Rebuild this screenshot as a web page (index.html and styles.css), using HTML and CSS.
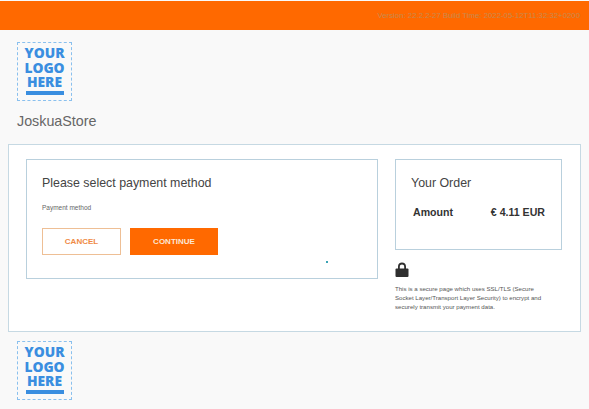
FILE: index.html

```html
<!DOCTYPE html>
<html lang="en">
<head>
  <meta charset="UTF-8" />
  <title>JoskuaStore</title>
  <link rel="stylesheet" href="styles.css">
</head>
<body>
<header class="top-bar">
  <span class="version">Version: 22.2.2-27 Build Time: 2022-05-12T11:32:32+0200</span>
</header>

<div class="logo">
  <span>YOUR</span>
  <span>LOGO</span>
  <span>HERE</span>
  <div class="logo-line"></div>
</div>
<h1 class="store-name">JoskuaStore</h1>

<main class="panel">
  <section class="card payment">
    <h2>Please select payment method</h2>
    <p class="method-label">Payment method</p>
    <div class="buttons">
      <button class="btn btn-cancel">CANCEL</button>
      <button class="btn btn-continue">CONTINUE</button>
    </div>
    <div class="spinner-dot"></div>
  </section>

  <aside class="side">
    <section class="card order">
      <h2>Your Order</h2>
      <div class="amount-row">
        <span>Amount</span>
        <span>€ 4.11 EUR</span>
      </div>
    </section>
    <svg class="lock" width="14" height="15" viewBox="0 0 14 15">
      <path d="M3 7V4.6C3 2.2 4.7.6 7 .6s4 1.6 4 4V7H9.2V4.7C9.2 3.3 8.3 2.4 7 2.4s-2.2.9-2.2 2.3V7z" fill="#2f2f2f"/>
      <rect x="0.5" y="6.5" width="13" height="8.5" rx="1" fill="#2f2f2f"/>
    </svg>
    <p class="secure-text">This is a secure page which uses SSL/TLS (Secure Socket Layer/Transport Layer Security) to encrypt and securely transmit your payment data.</p>
  </aside>
</main>

<div class="logo logo-bottom">
  <span>YOUR</span>
  <span>LOGO</span>
  <span>HERE</span>
  <div class="logo-line"></div>
</div>
</body>
</html>
```

FILE: styles.css

```css
html, body { height: 409px; overflow: hidden; }
body { font-family: "Liberation Sans", Arial, sans-serif; margin: 0; padding: 1px 0 0; background: #f9f9f9; color: #444; box-sizing: border-box; }

.top-bar {
  background: #ff6900;
  height: 29px;
  display: flex;
  justify-content: flex-end;
  align-items: center;
  padding-right: 9px;
}
.version { font-size: 7.8px; color: #c98a4e; }

.logo {
  width: 53px;
  height: 54px;
  margin: 12px 0 0 17px;
  border: 1px dashed #8ac0ee;
  display: flex;
  flex-direction: column;
  align-items: center;
  padding-top: 3px;
  font-family: "Open Sans", sans-serif;
  font-weight: 800;
  font-size: 13.8px;
  line-height: 14.5px;
  color: #3a8ee0;
}
.logo-line { width: 38px; height: 4px; background: #3a8ee0; margin-top: 1px; }
.logo-bottom { margin-top: 9px; }

.store-name { font-size: 14.3px; font-weight: normal; line-height: 18px; color: #666; margin: 11px 0 14px 17px; }

.panel {
  margin: 0 8px;
  height: 188px;
  box-sizing: border-box;
  background: #fff;
  border: 1px solid #c6d9e3;
  padding: 14px 17px 0;
  display: flex;
  gap: 17px;
}
.card { background: #fff; border: 1px solid #b9d0dd; box-sizing: border-box; }
.payment { width: 352px; height: 120px; padding: 16px 15px; position: relative; }
.card h2 { font-size: 12.4px; font-weight: normal; line-height: 14px; color: #444; margin: 0; }
.method-label { font-size: 6.5px; line-height: 8px; color: #666; margin: 14px 0 0; }

.buttons { display: flex; gap: 9px; margin-top: 16px; }
.btn {
  height: 27px;
  font-family: inherit;
  font-size: 8px;
  font-weight: bold;
  border-radius: 0;
  padding: 0;
}
.btn-cancel { width: 79px; background: #fff; border: 1px solid #eebf95; color: #ef8a45; }
.btn-continue { width: 88px; background: #ff6900; border: 1px solid #ff6900; color: #fbe6d4; }

.spinner-dot { position: absolute; right: 49px; bottom: 15px; width: 2px; height: 2px; background: #3aa3b5; }

.side { width: 167px; }
.order { height: 91px; padding: 16px 15px; }
.amount-row {
  display: flex;
  justify-content: space-between;
  margin: 15px 1px 0 2px;
  font-size: 10.6px;
  line-height: 14px;
  font-weight: bold;
  color: #333;
}
.lock { display: block; margin-top: 12px; }
.secure-text { font-size: 6.1px; line-height: 9px; color: #555; margin: 7px 0 0; width: 150px; }
```
